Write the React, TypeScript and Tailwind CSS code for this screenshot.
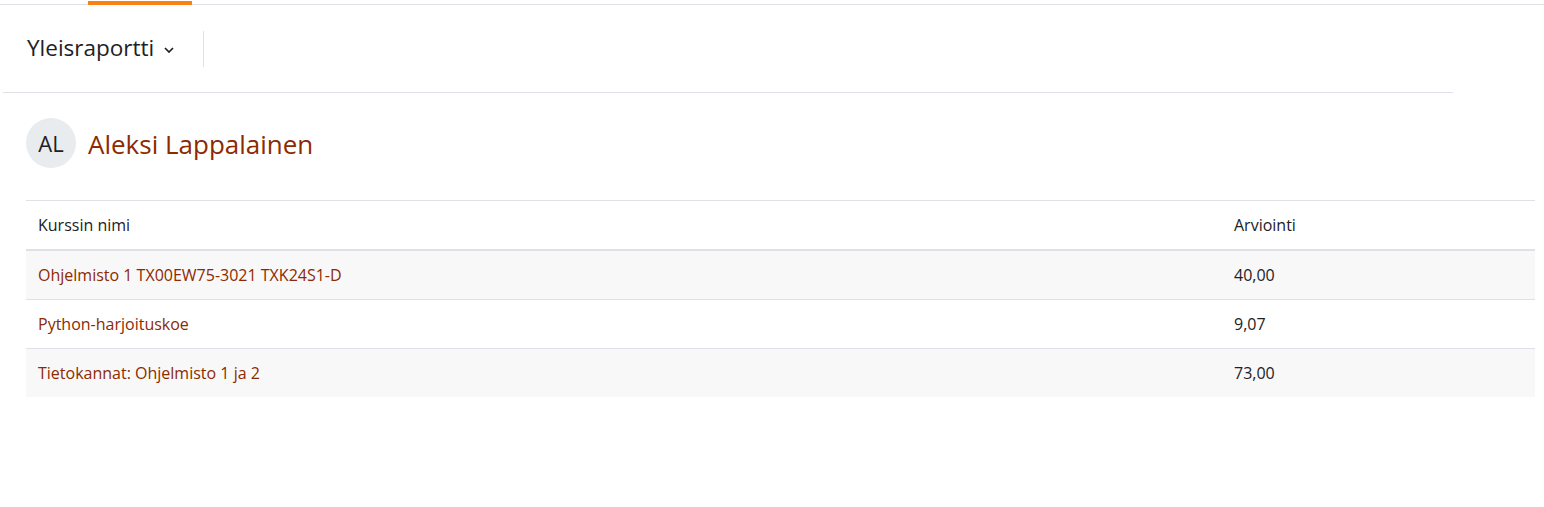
const rows = [
  { name: "Ohjelmisto 1 TX00EW75-3021 TXK24S1-D", grade: "40,00" },
  { name: "Python-harjoituskoe", grade: "9,07" },
  { name: "Tietokannat: Ohjelmisto 1 ja 2", grade: "73,00" },
];

const App = () => {
  return (
    <div className="w-[1544px] h-[507px] bg-white text-[#1d2125] font-['Open_Sans',sans-serif] overflow-hidden">
      {/* top nav strip */}
      <div className="h-[5px] border-b border-[#dee2e6] flex">
        <div className="ml-[88px] w-[104px] h-[4px] mt-[1px] bg-[#f98012]" />
      </div>

      <div className="ml-[3px] w-[1450px] h-[88px] border-b border-[#dee2e6] flex items-center">
        <div className="flex items-center pl-[24px] h-[36px]">
          <h2 className="text-[22.5px] leading-none text-[#1d2125]">Yleisraportti</h2>
          <svg className="ml-[10px] mt-[3px]" width="10" height="6" viewBox="0 0 10 6" fill="none">
            <path d="M1 1l4 4 4-4" stroke="#1d2125" strokeWidth="1.7" />
          </svg>
          <div className="ml-[29px] w-px h-[36px] bg-[#dee2e6]" />
        </div>
      </div>

      <div className="px-[26px] pt-[25px]">
        <div className="flex items-center gap-[12px]">
          <div className="w-[50px] h-[50px] rounded-full bg-[#e9ecef] flex items-center justify-center text-[22px] text-[#1d2125]">
            AL
          </div>
          <h2 className="text-[26px] text-[#8c2a00] leading-none mt-[2px]">Aleksi Lappalainen</h2>
        </div>

        <div className="mt-[32px] w-[1509px] border-t border-[#dee2e6] text-[16px] leading-[24px]">
          <div className="grid grid-cols-[1196px_1fr] border-b-2 border-[#dee2e6] text-[#1d2125]">
            <div className="p-[12px] pr-0">Kurssin nimi</div>
            <div className="p-[12px]">Arviointi</div>
          </div>
          {rows.map((r, i) => (
            <div
              key={r.name}
              className={
                "grid grid-cols-[1196px_1fr] " +
                (i % 2 === 0 ? "bg-[#f8f8f8] " : "bg-white ") +
                (i < rows.length - 1 ? "border-b border-[#dee2e6]" : "")
              }
            >
              <div className="p-[12px] pr-0 text-[#8c2a00]">{r.name}</div>
              <div className="p-[12px]">{r.grade}</div>
            </div>
          ))}
        </div>
      </div>
    </div>
  );
};

export default App;
